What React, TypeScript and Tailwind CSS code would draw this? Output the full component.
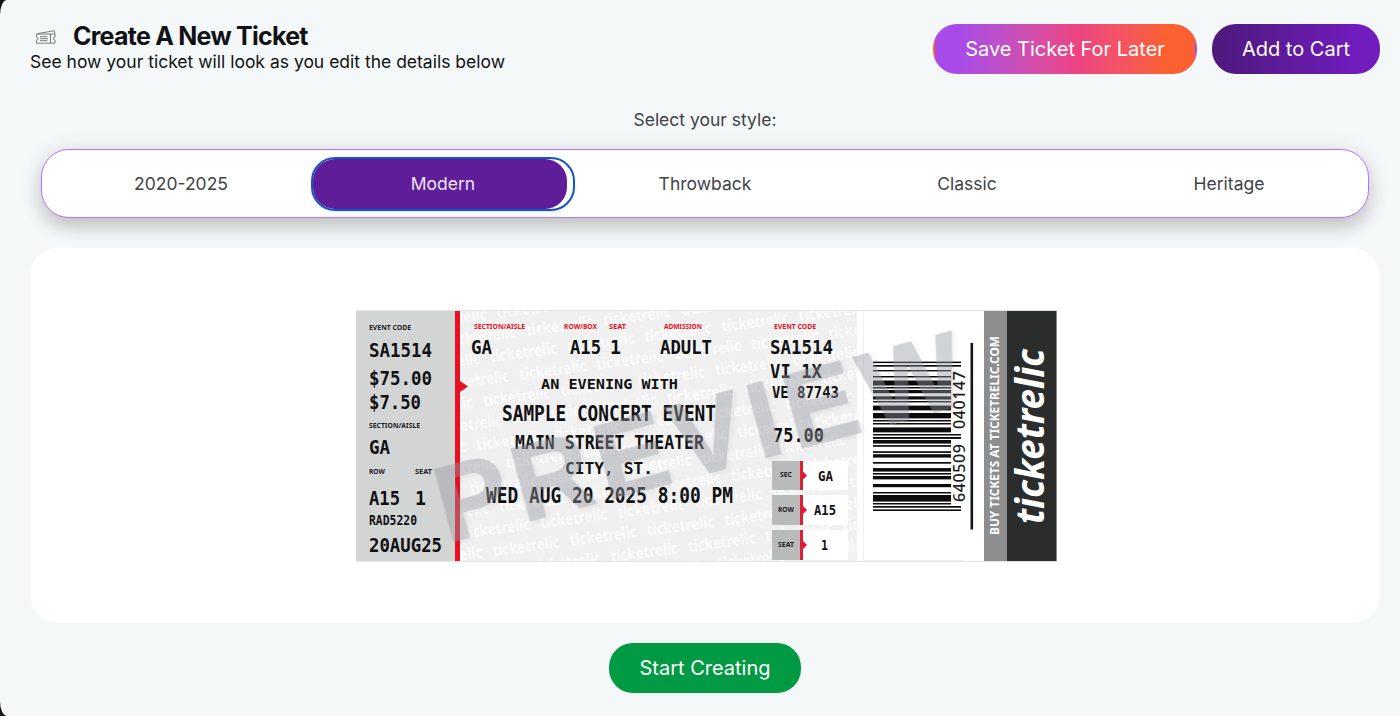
import { type ReactNode } from "react";

const styles = ["2020-2025", "Modern", "Throwback", "Classic", "Heritage"];

const mono = "'DejaVu Sans Mono', monospace";
const sans = "'Noto Sans', sans-serif";

const backdrop = Array(7).fill("ticketrelic").join("\u00a0\u00a0\u00a0");

// [y, height, long]
const bars: [number, number, boolean?][] = [
  [51.6, 1.5, true], [55, 1.7, true], [60, 1.4], [66, 1.5], [70.5, 5],
  [77, 1.5], [80, 3.2], [86.3, 3.2], [91, 1.4], [95.6, 4.8], [103, 5.4],
  [110, 1.5], [113, 1.5], [117.4, 5], [124, 1.5, true], [127, 1.9, true],
  [130, 3.6], [135.1, 1.7], [141.2, 1.7], [144.2, 3.4], [152, 1.7],
  [158.1, 3.5], [163, 1.6], [166, 3.4], [174, 3.2], [182, 1.5], [185, 6.6],
  [193, 1.5], [196, 1.7, true], [199.4, 1.6, true],
];

type LineProps = {
  x: number;
  y: number;
  w: number;
  size: number;
  fill?: string;
  children: ReactNode;
};

// Dot-matrix style text, tall and squeezed to its width
function Print({ x, y, w, size, fill = "#111113", children }: LineProps) {
  return (
    <text
      x={x}
      y={y}
      fontFamily={mono}
      fontWeight={700}
      fontSize={size}
      textLength={w}
      lengthAdjust="spacingAndGlyphs"
      fill={fill}
    >
      {children}
    </text>
  );
}

function Label({ x, y, w, size, fill = "#1c1c1e", children }: LineProps) {
  return (
    <text
      x={x}
      y={y}
      fontFamily={sans}
      fontWeight={700}
      fontSize={size}
      textLength={w}
      lengthAdjust="spacingAndGlyphs"
      fill={fill}
    >
      {children}
    </text>
  );
}

function StubBox({ y, h, label, lx, lw, value, vx, vw }: {
  y: number; h: number; label: string; lx: number; lw: number; value: string; vx: number; vw: number;
}) {
  return (
    <g>
      <rect x={416} y={y} width={76} height={h} fill="#fff" />
      <rect x={416} y={y} width={28} height={h} fill="#b9bbba" />
      <rect x={444} y={y} width={3} height={h} fill="#dc2035" />
      <path d={`M447 ${y + h / 2 - 4}l4 4-4 4z`} fill="#e8152b" />
      <Label x={lx} y={y + h / 2 + 1.5} w={lw} size={7.3}>{label}</Label>
      <Print x={vx} y={y + h / 2 + 5} w={vw} size={14}>{value}</Print>
    </g>
  );
}

function TicketPreview() {
  return (
    <svg width="701" height="252" viewBox="0 0 701 252">
      <defs>
        <clipPath id="body">
          <rect x="104" y="1" width="397" height="250" />
        </clipPath>
        <filter id="soft" x="-5%" y="-5%" width="110%" height="110%">
          <feDropShadow dx="3" dy="3" stdDeviation="2" floodColor="#000" floodOpacity="0.1" />
        </filter>
      </defs>

      <rect x="0.5" y="0.5" width="700" height="251" fill="#fff" stroke="#e5e5e5" />
      <rect x="104" y="1" width="397" height="250" fill="#f0f0f0" />
      <g clipPath="url(#body)">
        <g transform="rotate(-7.5 104 0)" fontFamily={sans} fontWeight={700} fontSize={16} fill="#fafafa">
          {Array.from({ length: 14 }, (_, i) => (
            <text key={i} x={62 + (i % 2) * 33 - i * 6.2} y={13 + i * 21.4} textLength={535} lengthAdjust="spacingAndGlyphs">
              {backdrop}
            </text>
          ))}
        </g>
      </g>

      {/* Left stub */}
      <rect x="0" y="1" width="99" height="250" fill="#d3d5d4" />
      <rect x="99" y="1" width="5" height="250" fill="#e81123" />
      <path d="M104 71l8 5.5-8 5.5z" fill="#e81123" />
      <Label x={13} y={20} w={42} size={7.8}>EVENT CODE</Label>
      <Print x={13} y={47} w={63} size={20}>SA1514</Print>
      <Print x={13} y={75} w={63} size={20}>$75.00</Print>
      <Print x={13} y={99} w={52} size={20}>$7.50</Print>
      <Label x={13} y={118} w={51} size={7.8}>SECTION/AISLE</Label>
      <Print x={13} y={144} w={21} size={20}>GA</Print>
      <Label x={13} y={164} w={16} size={7.8}>ROW</Label>
      <Label x={59} y={164} w={17} size={7.8}>SEAT</Label>
      <Print x={13} y={195} w={31} size={20}>A15</Print>
      <Print x={59} y={195} w={11} size={20}>1</Print>
      <Print x={13} y={215} w={48} size={13.5}>RAD5220</Print>
      <Print x={13} y={242} w={73} size={20}>20AUG25</Print>

      {/* Event details */}
      <Label x={118} y={19} w={51} size={7.8} fill="#e81123">SECTION/AISLE</Label>
      <Label x={208} y={19} w={33} size={7.8} fill="#e81123">ROW/BOX</Label>
      <Label x={253} y={19} w={17} size={7.8} fill="#e81123">SEAT</Label>
      <Label x={308} y={19} w={38} size={7.8} fill="#e81123">ADMISSION</Label>
      <Label x={418} y={19} w={42} size={7.8} fill="#e81123">EVENT CODE</Label>
      <Print x={115} y={44} w={21} size={20}>GA</Print>
      <Print x={214} y={44} w={31} size={20}>A15</Print>
      <Print x={254} y={44} w={11} size={20}>1</Print>
      <Print x={304} y={44} w={52} size={20}>ADULT</Print>
      <Print x={185} y={79} w={137} size={14}>AN EVENING WITH</Print>
      <Print x={146} y={111} w={214} size={21}>SAMPLE CONCERT EVENT</Print>
      <Print x={159} y={139} w={189} size={19.5}>MAIN STREET THEATER</Print>
      <Print x={209} y={164} w={88} size={15.5}>CITY, ST.</Print>
      <Print x={130} y={193} w={247} size={21}>WED AUG 20 2025 8:00 PM</Print>
      <Print x={414} y={44} w={63} size={20}>SA1514</Print>
      <Print x={414} y={68} w={52} size={19.5}>VI 1X</Print>
      <Print x={416} y={88} w={67} size={15.5}>VE 87743</Print>
      <Print x={417} y={132} w={51} size={19.5}>75.00</Print>
      <StubBox y={151} h={29} label="SEC" lx={424} lw={12} value="GA" vx={462} vw={15} />
      <StubBox y={185} h={30} label="ROW" lx={422} lw={16} value="A15" vx={458} vw={22} />
      <StubBox y={220} h={30} label="SEAT" lx={422} lw={16} value="1" vx={465} vw={7} />

      {/* Barcode */}
      <path d="M507.5 1v250M507 250.5h101" stroke="#f0f0f0" />
      {bars.map(([y, h, long]) => (
        <rect key={y} x={517} y={y} width={long ? 88 : 78} height={h} fill="#0c0c0e" />
      ))}
      <g transform="translate(609 192) rotate(-90)">
        <text fontFamily={sans} fontWeight={500} fontSize={16} textLength={58} fill="#1c1c1e">640509</text>
        <text x={73} fontFamily={sans} fontWeight={500} fontSize={16} textLength={58} fill="#1c1c1e">040147</text>
      </g>
      <rect x="614.5" y="33" width="2.6" height="186.5" fill="#15161c" />

      {/* Brand strip */}
      <rect x="628" y="1" width="23" height="250" fill="#8e8e8e" />
      <rect x="651" y="1" width="49.5" height="250" fill="#2b2d2c" />
      <g transform="translate(643 225) rotate(-90)">
        <Label x={0} y={0} w={199} size={13} fill="#fff">BUY TICKETS AT TICKETRELIC.COM</Label>
      </g>
      <g transform="translate(688 214) rotate(-90)">
        <text fontFamily={sans} fontStyle="italic" fontWeight={700} fontSize={39} textLength={175} lengthAdjust="spacingAndGlyphs" fill="#fff">
          ticketrelic
        </text>
      </g>

      <g transform="translate(91 233) rotate(-15)" filter="url(#soft)" opacity="0.42">
        <text fontFamily="'Liberation Sans', sans-serif" fontWeight={700} fontSize={108} textLength={542} fill="#95979f" stroke="#95979f" strokeWidth={1.5}>
          PREVIEW
        </text>
      </g>
    </svg>
  );
}

function TicketIcon() {
  return (
    <svg width="22" height="16" viewBox="0 0 22 16" fill="none" stroke="#6d6f71" strokeWidth="0.9">
      <path d="M1.5 5h18.5v3a1.6 1.6 0 0 0 0 3.2v3h-18.5v-3a1.6 1.6 0 0 0 0-3.2z" />
      <path d="M2.5 4.7l16.6-3 .9 3M15.5 5v9" />
      <path d="M5 7.7h7.5M5 9.7h8M5 11.7h7.5" />
    </svg>
  );
}

export default function App() {
  return (
    <div className="h-[716px] w-full overflow-hidden bg-[#161718]">
      <div className="flex h-full flex-col rounded-tl-[7px_15px] rounded-bl-[7px_15px] bg-[#f4f8f9] pr-5 pl-[30px] pt-6 font-['Inter',sans-serif] text-[#111214]">
        {/* Header */}
        <header className="flex h-[50px] justify-between">
          <div>
            <div className="flex h-6 items-center gap-4 pt-0.5">
              <span className="w-[27px] pl-[5px]">
                <TicketIcon />
              </span>
              <h1 className="text-[25px] font-bold tracking-[-0.75px]">Create A New Ticket</h1>
            </div>
            <p className="text-[17.5px] leading-7">
              See how your ticket will look as you edit the details below
            </p>
          </div>
          <div className="flex gap-[15px] text-xl text-white">
            <button className="h-[50px] w-[264px] rounded-3xl border-2 border-transparent bg-linear-to-r from-[#a94be8] from-10% via-[#ee4381] via-55% to-[#fa6030] to-88%">
              Save Ticket For Later
            </button>
            <button className="h-[50px] w-[168px] rounded-3xl bg-linear-to-r from-[#4f197f] from-5% to-[#711cbc] to-85%">
              Add to Cart
            </button>
          </div>
        </header>

        {/* Style picker */}
        <p className="mt-8 text-center text-[17.5px] leading-7 text-[#3f4247]">Select your style:</p>
        <nav className="mx-[11px] mt-[15px] grid h-[69px] grid-cols-5 rounded-[28px] border border-[#b970f8] bg-white p-2 shadow-[0_10px_18px_rgba(0,0,0,0.17),0_2px_26px_rgba(40,20,0,0.09)]">
          {styles.map((name) =>
            name === "Modern" ? (
              <button key={name} className="-mx-px -mt-px -mb-0.5 rounded-[24px] border-2 border-[#1454c4] pr-1.5 text-[17.5px] text-[#ece4f4] shadow-sm">
                <span className="flex h-full items-center justify-center rounded-[22px] bg-[#5f1d9a] pl-1.5">{name}</span>
              </button>
            ) : (
              <button key={name} className="pt-0.5 text-[17.5px] text-[#3f4247]">
                {name}
              </button>
            )
          )}
        </nav>

        {/* Preview */}
        <main className="mt-[30px] flex h-[375px] justify-center rounded-[28px] bg-white pt-[62px] pl-[2px]">
          <TicketPreview />
        </main>

        <button className="mx-auto mt-5 h-[50px] w-48 rounded-3xl bg-[#009a44] text-xl text-white">
          Start Creating
        </button>
      </div>
    </div>
  );
}
